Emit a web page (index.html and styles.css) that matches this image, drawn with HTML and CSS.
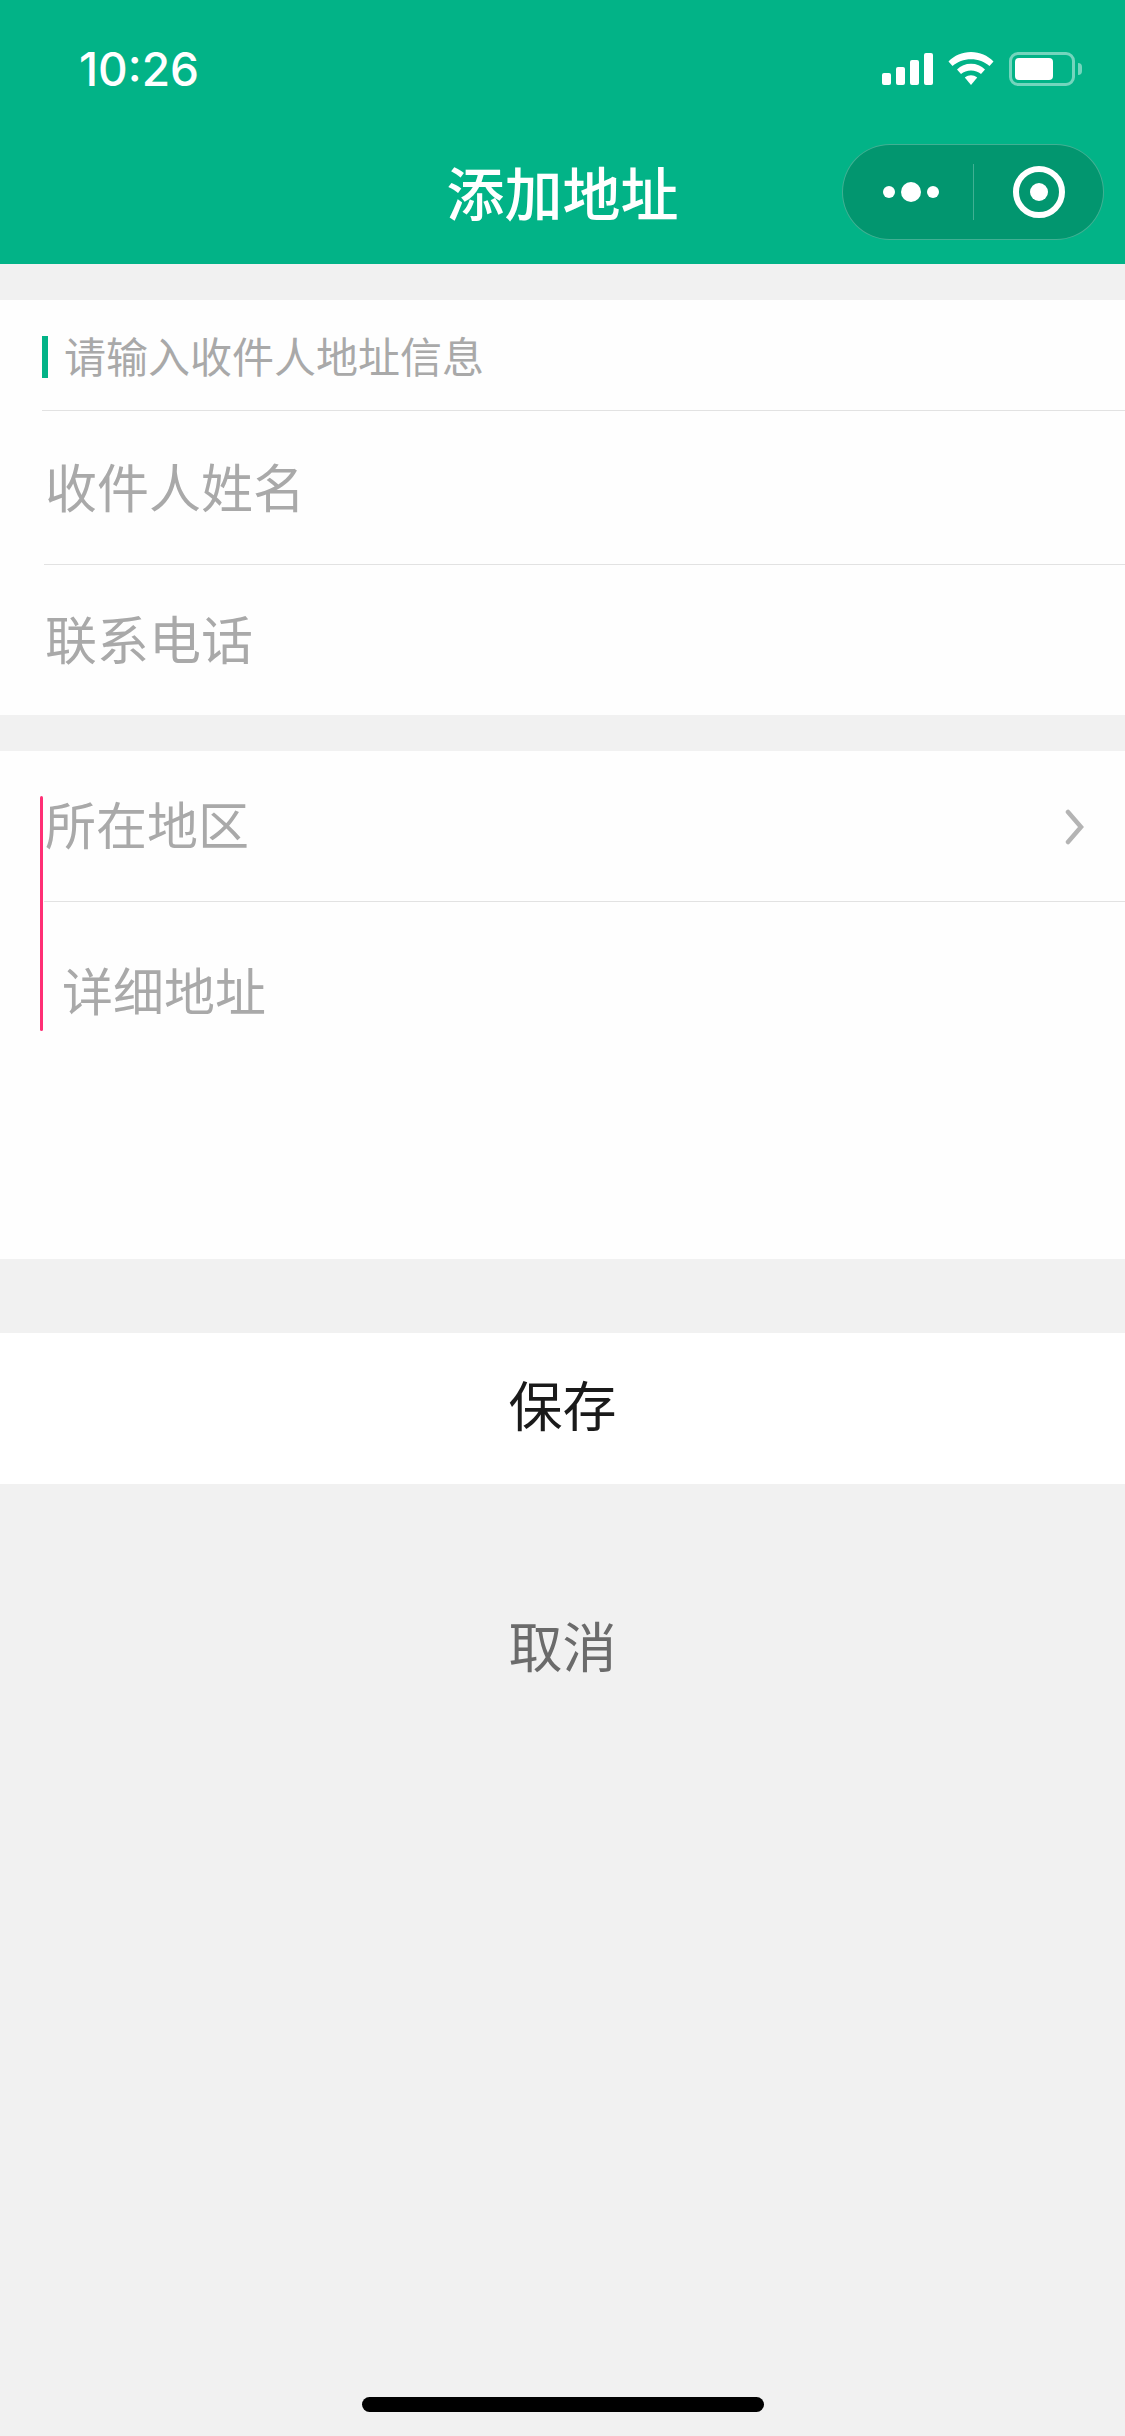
FILE: index.html
```html
<!DOCTYPE html>
<html lang="zh">
<head>
    <meta charset="UTF-8">
    <meta name="viewport" content="width=device-width, initial-scale=1.0">
    <title>添加地址</title>
    <link rel="stylesheet" href="styles.css">
</head>
<body>
    <header class="top-bar">
        <div class="status-bar">
            <span class="time">10:26</span>
            <div class="status-icons">
                <svg class="icon-signal" width="51" height="32" viewBox="0 0 51 32">
                    <rect x="0" y="20" width="9" height="12" rx="2"/>
                    <rect x="14" y="14" width="9" height="18" rx="2"/>
                    <rect x="28" y="7" width="9" height="25" rx="2"/>
                    <rect x="42" y="0" width="9" height="32" rx="2"/>
                </svg>
                <svg class="icon-wifi" width="46" height="33" viewBox="0 0 46 33">
                    <path d="M23 0C14 0 6.500 3.400 0.500 9.500L4.500 14C9.500 9.800 15.800 7.300 23 7.300S36.500 9.800 41.500 14L45.500 9.500C39.500 3.400 32 0 23 0Z"/>
                    <path d="M23 11.800C17.500 11.800 12.800 13.800 9 17.500L13 22C15.700 19.800 19.100 18.600 23 18.600S30.300 19.800 33 22L37 17.500C33.200 13.800 28.500 11.800 23 11.800Z"/>
                    <path d="M23 23.200C20.800 23.200 18.900 24 16.800 25.600L23 33L29.200 25.600C27.100 24 25.200 23.200 23 23.200Z"/>
                </svg>
                <div class="battery">
                    <div class="battery-body"><div class="battery-level"></div></div>
                    <div class="battery-nub"></div>
                </div>
            </div>
        </div>
        <div class="nav-bar">
            <h1 class="nav-title">添加地址</h1>
            <div class="capsule">
                <div class="capsule-more">
                    <span class="dot"></span>
                    <span class="dot dot-big"></span>
                    <span class="dot"></span>
                </div>
                <div class="capsule-line"></div>
                <div class="capsule-close"><span class="close-inner"></span></div>
            </div>
        </div>
    </header>

    <main class="content">
        <section class="group">
            <div class="hint-row">
                <span class="hint-mark"></span>
                <span class="hint-text">请输入收件人地址信息</span>
            </div>
            <div class="field field-name">收件人姓名</div>
            <div class="field field-phone">联系电话</div>
        </section>

        <section class="group group-address">
            <span class="cursor-line"></span>
            <div class="field field-region">
                <span>所在地区</span>
                <svg class="chevron" width="20" height="36" viewBox="0 0 20 36">
                    <path d="M4 3L17 18L4 33"/>
                </svg>
            </div>
            <div class="field-detail">详细地址</div>
        </section>

        <button class="btn btn-save">保存</button>
        <button class="btn btn-cancel">取消</button>
    </main>

    <div class="home-indicator"></div>
</body>
</html>
```

FILE: styles.css
```css
:root {
    --green: #02b387;
    --bg: #f1f1f1;
    --line: #e2e2e2;
    --placeholder: #a9a9a9;
}

* {
    margin: 0;
    padding: 0;
    box-sizing: border-box;
    font-family: 'Noto Sans CJK SC', 'Inter', sans-serif;
}

body {
    width: 1125px;
    height: 2436px;
    background: var(--bg);
    position: relative;
    overflow: hidden;
}

.top-bar {
    height: 264px;
    background: var(--green);
    color: white;
}

.status-bar {
    height: 132px;
    display: flex;
    justify-content: space-between;
    align-items: flex-start;
    padding: 41px 43px 0 79px;
}

.time {
    font-family: 'Inter', sans-serif;
    font-size: 46px;
    font-weight: 500;
    line-height: 56px;
}

.status-icons {
    display: flex;
    align-items: flex-start;
    padding-top: 11px;
}

.icon-signal {
    fill: white;
    margin-top: 1px;
}

.icon-wifi {
    fill: white;
    margin-left: 15px;
}

.battery {
    display: flex;
    align-items: center;
    margin-left: 15px;
}

.battery-body {
    width: 66px;
    height: 34px;
    border: 3px solid rgba(255, 255, 255, 0.45);
    border-radius: 9px;
    padding: 3px;
}

.battery-level {
    width: 38px;
    height: 100%;
    background: white;
    border-radius: 4px;
}

.battery-nub {
    width: 4px;
    height: 12px;
    margin-left: 3px;
    background: rgba(255, 255, 255, 0.45);
    border-radius: 0 4px 4px 0;
}

.nav-bar {
    height: 132px;
    display: flex;
    justify-content: center;
    position: relative;
    padding-top: 23px;
}

.nav-title {
    font-size: 58px;
    font-weight: 500;
    line-height: 72px;
}

.capsule {
    position: absolute;
    top: 12px;
    right: 21px;
    width: 262px;
    height: 96px;
    display: flex;
    align-items: center;
    background: #02966f;
    border: 1px solid rgba(255, 255, 255, 0.25);
    border-radius: 48px;
}

.capsule-more {
    width: 130px;
    padding-left: 6px;
    display: flex;
    align-items: center;
    justify-content: center;
    gap: 6px;
}

.dot {
    width: 12px;
    height: 12px;
    background: white;
    border-radius: 50%;
}

.dot-big {
    width: 20px;
    height: 20px;
}

.capsule-line {
    width: 1px;
    height: 56px;
    background: rgba(255, 255, 255, 0.25);
}

.capsule-close {
    width: 52px;
    height: 52px;
    margin-left: 39px;
    border: 6px solid white;
    border-radius: 50%;
    display: flex;
    align-items: center;
    justify-content: center;
}

.close-inner {
    width: 18px;
    height: 18px;
    background: white;
    border-radius: 50%;
}

.content {
    padding-top: 36px;
}

.group {
    background: #fefefe;
    margin-bottom: 36px;
}

.hint-row {
    height: 111px;
    margin-left: 42px;
    display: flex;
    align-items: center;
    border-bottom: 1px solid var(--line);
    padding-top: 4px;
}

.hint-mark {
    width: 6px;
    height: 42px;
    background: var(--green);
}

.hint-text {
    margin-left: 16px;
    padding-bottom: 4px;
    font-size: 42px;
    line-height: 56px;
    color: var(--placeholder);
}

.field {
    display: flex;
    align-items: center;
    margin-left: 44px;
    font-size: 52px;
    color: var(--placeholder);
}

.field-name {
    height: 154px;
    padding: 0 0 4px 1px;
    border-bottom: 1px solid var(--line);
}

.field-phone {
    height: 150px;
    padding: 0 0 6px 1px;
}

.group-address {
    height: 508px;
    margin-bottom: 74px;
    position: relative;
}

.cursor-line {
    position: absolute;
    left: 40px;
    top: 45px;
    width: 3px;
    height: 235px;
    background: #ff2f75;
    border-radius: 2px;
}

.field-region {
    height: 151px;
    justify-content: space-between;
    font-size: 51px;
    border-bottom: 1px solid var(--line);
    padding: 0 41px 7px 1px;
}

.chevron {
    margin-top: 8px;
    fill: none;
    stroke: #b4b4b4;
    stroke-width: 4.500;
    stroke-linecap: round;
    stroke-linejoin: miter;
}

.field-detail {
    padding: 54px 0 0 62px;
    font-size: 51px;
    line-height: 66px;
    color: var(--placeholder);
}

.btn {
    display: block;
    width: 100%;
    border: none;
    font-size: 54px;
    text-align: center;
}

.btn-save {
    height: 151px;
    padding-bottom: 10px;
    background: white;
    color: #1a1a1a;
}

.btn-cancel {
    height: 151px;
    margin-top: 88px;
    padding-bottom: 6px;
    background: none;
    color: #6b6b6b;
}

.home-indicator {
    position: absolute;
    left: 362px;
    bottom: 24px;
    width: 402px;
    height: 15px;
    background: black;
    border-radius: 8px;
}
```
